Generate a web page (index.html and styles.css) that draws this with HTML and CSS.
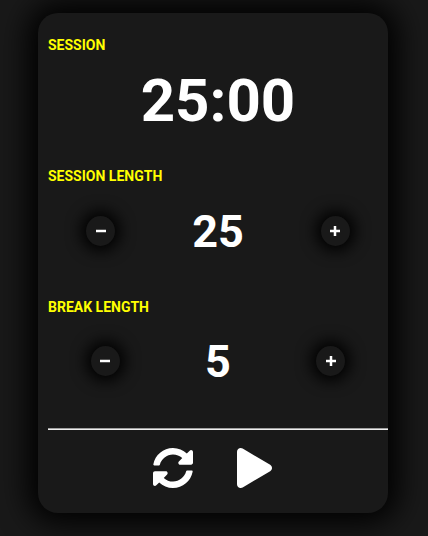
FILE: index.html
```html
<!DOCTYPE html>
<html lang="en">
<head>
<meta charset="utf-8">
<title>Session Timer</title>
<link rel="stylesheet" href="styles.css">
</head>
<body>
<main class="card">
  <h1 class="label">SESSION</h1>
  <div class="timer">25:00</div>
  <h2 class="label">SESSION LENGTH</h2>
  <div class="row">
    <button class="step" aria-label="Decrease session"><svg viewBox="0 0 10 10"><path d="M0 5h10"/></svg></button>
    <span class="value">25</span>
    <button class="step" aria-label="Increase session"><svg viewBox="0 0 10 10"><path d="M0 5h10M5 0v10"/></svg></button>
  </div>
  <h2 class="label">BREAK LENGTH</h2>
  <div class="row row-break">
    <button class="step" aria-label="Decrease break"><svg viewBox="0 0 10 10"><path d="M0 5h10"/></svg></button>
    <span class="value">5</span>
    <button class="step" aria-label="Increase break"><svg viewBox="0 0 10 10"><path d="M0 5h10M5 0v10"/></svg></button>
  </div>
  <div class="controls">
    <svg class="sync" viewBox="8 8 496 496"><path d="M370.72 133.28C339.458 104.008 298.888 87.962 255.848 88c-77.458.068-144.328 53.178-162.791 126.85-1.344 5.363-6.122 9.15-11.651 9.15H24.103c-7.498 0-13.194-6.807-11.807-14.176C33.933 94.924 134.813 8 256 8c66.448 0 126.791 26.136 171.315 68.685L463.03 40.97C478.149 25.851 504 36.559 504 57.941V192c0 13.255-10.745 24-24 24H345.941c-21.382 0-32.09-25.851-16.971-40.971l41.75-41.749zM32 296h134.059c21.382 0 32.09 25.851 16.971 40.971l-41.75 41.75c31.262 29.273 71.835 45.319 114.876 45.28 77.418-.07 144.315-53.144 162.787-126.849 1.344-5.363 6.122-9.15 11.651-9.15h57.304c7.498 0 13.194 6.807 11.807 14.176C478.067 417.076 377.187 504 256 504c-66.448 0-126.791-26.136-171.315-68.685L48.97 471.03C33.851 486.149 8 475.441 8 454.059V320c0-13.255 10.745-24 24-24z"/></svg>
    <svg class="play" viewBox="0 0 448 512"><path d="M424.4 214.7L72.4 6.6C43.8-10.3 0 6.1 0 47.9V464c0 37.5 40.7 60.1 72.4 41.3l352-208c31.4-18.5 31.5-64.1 0-82.6z"/></svg>
  </div>
</main>
</body>
</html>
```
FILE: styles.css
```css
* { box-sizing: border-box; }
body {
  margin: 0;
  height: 536px;
  padding: 13px 0 0 38px;
  overflow: hidden;
  background: #191919;
  color: #fff;
  font-family: Roboto, sans-serif;
  font-weight: 700;
}
.card {
  width: 350px;
  height: 500px;
  padding: 24px 0 0 10px;
  border-radius: 20px;
  background: #191919;
  box-shadow: 0 0 30px 10px #000;
}
.label {
  margin: 0;
  height: 16px;
  font-size: 14px;
  line-height: 16px;
  color: #ff0;
}
.timer {
  height: 115px;
  padding-top: 13px;
  font-size: 60px;
  line-height: 70px;
  text-align: center;
}
.row {
  display: flex;
  justify-content: space-around;
  align-items: center;
  height: 53px;
  margin: 20px 0 42px;
}
.row-break { margin: 19px 0 41px; }
.value {
  padding-top: 2px;
  font-size: 45px;
  line-height: 53px;
}
.step {
  display: flex;
  align-items: center;
  justify-content: center;
  width: 29px;
  height: 30px;
  padding: 0;
  border: 0;
  border-radius: 50%;
  background: #191919;
  box-shadow: 0 0 15px 5px #000;
}
.step svg {
  width: 10px;
  height: 10px;
  fill: none;
  stroke: #fff;
  stroke-width: 2.5;
}
.controls {
  display: flex;
  gap: 44px;
  padding: 19px 0 0 105px;
  border-top: 1px solid #a0a0a0;
  box-shadow: inset 0 1px #eee;
}
.controls svg { height: 40px; fill: #fff; }
.sync { width: 40px; }
.play { width: 35px; }
```
